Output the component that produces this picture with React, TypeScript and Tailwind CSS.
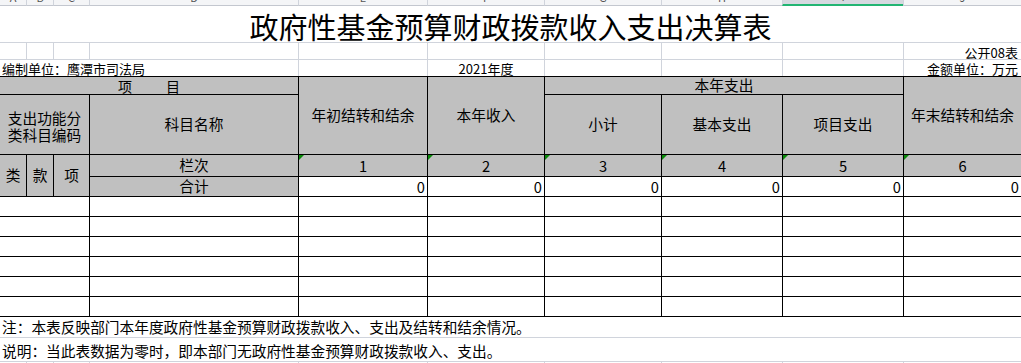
import React from 'react';

const letters = ['A', 'B', 'C', 'D', 'E', 'F', 'G', 'H', 'I', 'J'];
const colStart = ['col-start-1', 'col-start-2', 'col-start-3', 'col-start-4', 'col-start-5', 'col-start-6', 'col-start-7', 'col-start-8', 'col-start-9', 'col-start-10'];
const blankRows = ['row-start-9', 'row-start-10', 'row-start-11', 'row-start-12', 'row-start-13', 'row-start-14'];
const moneyCols = [4, 5, 6, 7, 8, 9];

const gray = 'bg-[#c0c0c0]';
const line = 'border-[#d0d4dc]';

function Tri() {
  return <span className="absolute left-0 top-0 h-0 w-0 border-t-[5px] border-r-[5px] border-t-[#0b8a0b] border-r-transparent" />;
}

export default function App() {
  return (
    <div className="h-[363px] w-[1021px] overflow-hidden bg-white font-['Noto_Sans_CJK_SC',sans-serif] text-black">
      <div className="grid grid-cols-[26px_27px_36px_209px_129px_117px_117px_121px_121px_118px] grid-rows-[6px_36px_17px_17px_18px_60px_22px_20px_20px_20px_20px_20px_20px_20px_21px_24px_2px]">
        {/* column letters, mostly scrolled out of view */}
        {letters.map((l, i) => (
          <div
            key={l}
            className={
              'row-start-1 flex items-end justify-center overflow-hidden ' +
              colStart[i] +
              (i > 0 ? ' border-l border-[#d0d4dc]' : '') +
              (l === 'I' ? ' border-b-2 border-b-[#22b573] bg-[#d6d9e0]' : ' border-b border-b-[#c3c7cf] bg-[#f4f5f7]')
            }
          >
            <span className="mb-[2px] text-[11px] leading-none text-[#555]">{l}</span>
          </div>
        ))}

        {/* title */}
        <div className="col-span-10 col-start-1 row-start-2 flex items-center justify-center pt-[5px] text-[29px] leading-none">
          政府性基金预算财政拨款收入支出决算表
        </div>

        {/* row 3 */}
        {letters.map((l, i) => (
          <div key={'r3' + l} className={'row-start-3 border-t ' + line + ' ' + colStart[i] + (i > 0 ? ' border-l' : '')}>
            {l === 'J' ? <div className="flex h-full items-center justify-end pr-[3px] pt-[2px] text-[13px] leading-none">公开08表</div> : null}
          </div>
        ))}

        {/* row 4 */}
        <div className={'col-span-4 col-start-1 row-start-4 flex items-center border-t pl-[2px] pt-[1px] text-[13px] leading-none ' + line}>编制单位：鹰潭市司法局</div>
        <div className={'col-start-5 row-start-4 border-l border-t ' + line} />
        <div className={'col-start-6 row-start-4 flex items-center justify-center border-l border-t pt-[1px] text-[13px] leading-none ' + line}>2021年度</div>
        <div className={'col-start-7 row-start-4 border-l border-t ' + line} />
        <div className={'col-start-8 row-start-4 border-l border-t ' + line} />
        <div className={'col-start-9 row-start-4 border-l border-t ' + line} />
        <div className={'col-start-10 row-start-4 flex items-center justify-end border-l border-t pr-[3px] pt-[1px] text-[13px] leading-none ' + line}>金额单位：万元</div>

        {/* table header */}
        <div className={'col-span-4 col-start-1 row-start-5 flex items-center justify-center border-t border-black text-[14px] leading-none ' + gray}>
          项<span className="inline-block w-[34px]" />目
        </div>
        <div className={'col-span-3 col-start-1 row-start-6 flex items-center justify-center border-t border-black text-[14.7px] leading-[17px] ' + gray}>
          <div className="pt-[2px] text-center">支出功能分<br />类科目编码</div>
        </div>
        <div className={'col-start-4 row-start-6 flex items-center justify-center border-l border-t border-black text-[14.7px] leading-none ' + gray}>科目名称</div>
        <div className={'col-start-5 row-span-2 row-start-5 flex items-center justify-center border-l border-t border-black text-[14.7px] leading-none ' + gray}>年初结转和结余</div>
        <div className={'col-start-6 row-span-2 row-start-5 flex items-center justify-center border-l border-t border-black text-[14.7px] leading-none ' + gray}>本年收入</div>
        <div className={'col-span-3 col-start-7 row-start-5 flex items-center justify-center border-l border-t border-black text-[14.7px] leading-none ' + gray}>本年支出</div>
        <div className={'col-start-7 row-start-6 flex items-center justify-center border-l border-t border-black text-[14.7px] leading-none ' + gray}>小计</div>
        <div className={'col-start-8 row-start-6 flex items-center justify-center border-l border-t border-black text-[14.7px] leading-none ' + gray}>基本支出</div>
        <div className={'col-start-9 row-start-6 flex items-center justify-center border-l border-t border-black text-[14.7px] leading-none ' + gray}>项目支出</div>
        <div className={'col-start-10 row-span-2 row-start-5 flex items-center justify-center border-l border-t border-black text-[14.7px] leading-none ' + gray}>年末结转和结余</div>

        <div className={'col-start-1 row-span-2 row-start-7 flex items-center justify-center border-t border-black text-[14.7px] leading-none ' + gray}>类</div>
        <div className={'col-start-2 row-span-2 row-start-7 flex items-center justify-center border-l border-t border-black text-[14.7px] leading-none ' + gray}>款</div>
        <div className={'col-start-3 row-span-2 row-start-7 flex items-center justify-center border-l border-t border-black text-[14.7px] leading-none ' + gray}>项</div>
        <div className={'col-start-4 row-start-7 flex items-center justify-center border-l border-t border-black text-[14.7px] leading-none ' + gray}>栏次</div>
        <div className={'col-start-4 row-start-8 flex items-center justify-center border-l border-t border-black text-[14.7px] leading-none ' + gray}>合计</div>

        {moneyCols.map((c, i) => (
          <div key={'n' + c} className={'relative row-start-7 flex items-center justify-center border-l border-t border-black pt-[2px] text-[14.7px] leading-none ' + gray + ' ' + colStart[c]}>
            <Tri />
            {i + 1}
          </div>
        ))}
        {moneyCols.map((c) => (
          <div key={'z' + c} className={'row-start-8 flex items-center justify-end border-l border-t border-black pr-[2px] pt-[1px] text-[14.7px] leading-none ' + colStart[c]}>
            0
          </div>
        ))}

        {/* blank body rows */}
        {blankRows.map((r) => (
          <React.Fragment key={r}>
            <div className={'col-span-3 col-start-1 border-t border-black ' + r} />
            <div className={'col-start-4 border-l border-t border-black ' + r} />
            {moneyCols.map((c) => (
              <div key={r + c} className={'border-l border-t border-black ' + r + ' ' + colStart[c]} />
            ))}
          </React.Fragment>
        ))}

        {/* notes */}
        <div className="col-span-10 col-start-1 row-start-15 flex items-center border-t border-black pl-[2px] text-[14.7px] leading-none">
          注：本表反映部门本年度政府性基金预算财政拨款收入、支出及结转和结余情况。
        </div>
        <div className={'col-span-10 col-start-1 row-start-16 flex items-center border-t pl-[2px] pt-[3px] text-[14.7px] leading-none ' + line}>
          说明：当此表数据为零时，即本部门无政府性基金预算财政拨款收入、支出。
        </div>
        {letters.map((l, i) => (
          <div key={'r17' + l} className={'row-start-17 border-t ' + line + ' ' + colStart[i] + (i > 0 ? ' border-l' : '')} />
        ))}
      </div>
    </div>
  );
}
